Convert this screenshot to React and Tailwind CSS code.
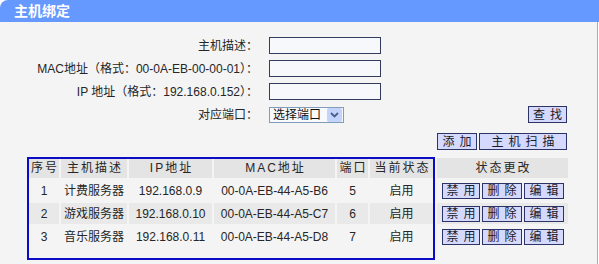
import React from "react";

function Btn({ chars, w, h = "h-[17px]" }) {
  return (
    <div
      className={`${w} ${h} flex items-center justify-center gap-[5px] border border-[#2c3466] bg-[#d5d9fd] text-[12px] leading-none text-[#1a1a2a]`}
    >
      {chars.map((c, i) => (
        <span key={i}>{c}</span>
      ))}
    </div>
  );
}

function Field({ label }) {
  return (
    <div className="flex h-[17px] items-center">
      <div className="w-[258px] text-right leading-none whitespace-nowrap">{label}</div>
      <div className="ml-[11px] h-[17px] w-[112px] border border-[#343c5e] bg-[#f6f8fc]" />
    </div>
  );
}

const rows = [
  ["1", "计费服务器", "192.168.0.9", "00-0A-EB-44-A5-B6", "5", "启用"],
  ["2", "游戏服务器", "192.168.0.10", "00-0A-EB-44-A5-C7", "6", "启用"],
  ["3", "音乐服务器", "192.168.0.11", "00-0A-EB-44-A5-D8", "7", "启用"],
];

const heads = ["序号", "主机描述", "IP地址", "MAC地址", "端口", "当前状态"];

export default function App() {
  return (
    <div className="h-[264px] w-[599px] overflow-hidden bg-white font-['Liberation_Sans','Noto_Sans_CJK_SC',sans-serif] text-[12px] text-[#262626]">
      <div className="flex h-[22px] items-center rounded-tl-[8px] bg-[#6699ff] pl-[14px] text-[14px] font-bold leading-none text-white">
        主机绑定
      </div>
      <div className="relative h-[242px] w-[598px] border-r border-[#e6a04a] bg-[#f4f4f4]">
        <div className="flex flex-col gap-[6px] pt-[15px]">
          <Field label="主机描述：" />
          <Field label="MAC地址（格式：00-0A-EB-00-00-01）：" />
          <Field label="IP 地址（格式：192.168.0.152）：" />
          <div className="flex h-[17px] items-center pr-[30px]">
            <div className="w-[258px] text-right leading-none">对应端口：</div>
            <div className="ml-[11px] flex h-[16px] w-[75px] items-center border border-[#7f9db9] bg-[#f8f9fc] pl-[3px]">
              <span className="flex-1 leading-none text-[#111]">选择端口</span>
              <div className="mr-[1px] flex h-[14px] w-[15px] items-center justify-center rounded-[2px] bg-[#c3d3fb]">
                <svg width="9" height="6" viewBox="0 0 9 6">
                  <path d="M1 1 L4.5 4.5 L8 1" fill="none" stroke="#4a5e90" strokeWidth="1.8" />
                </svg>
              </div>
            </div>
            <div className="ml-auto">
              <Btn chars={["查", "找"]} w="w-[39px]" />
            </div>
          </div>
          <div className="mt-[4px] flex justify-end gap-[2px] pr-[30px]">
            <Btn chars={["添", "加"]} w="w-[40px]" />
            <Btn chars={["主", "机", "扫", "描"]} w="w-[88px]" />
          </div>
        </div>

        <div className="mt-[8px] pl-[29px]">
          <div className="grid grid-cols-[30px_66px_83px_121px_31px_63px_133px] gap-x-[2px] gap-y-[2px]">
            {heads.map((h) => (
              <div
                key={h}
                className="flex h-[20px] items-center justify-center bg-[#e4e4e4] pl-[2px] leading-none tracking-[2px] whitespace-nowrap text-[#262626]"
              >
                {h}
              </div>
            ))}
            <div className="ml-[2px] flex h-[20px] items-center justify-center bg-[#e4e4e4] pl-[2px] leading-none tracking-[2px]">
              状态更改
            </div>
            {rows.map((r, ri) => {
              const bg = ri === 1 ? "bg-[#e9e9e9]" : "";
              return (
                <React.Fragment key={ri}>
                  {r.map((c, ci) => (
                    <div
                      key={ci}
                      className={`flex h-[21px] items-center justify-center leading-none whitespace-nowrap ${bg}`}
                    >
                      {c}
                    </div>
                  ))}
                  <div className={`ml-[2px] flex h-[21px] items-center gap-[2px] pl-[5px] ${bg}`}>
                    <Btn chars={["禁", "用"]} w="w-[38px]" h="h-[16px]" />
                    <Btn chars={["删", "除"]} w="w-[40px]" h="h-[16px]" />
                    <Btn chars={["编", "辑"]} w="w-[40px]" h="h-[16px]" />
                  </div>
                </React.Fragment>
              );
            })}
          </div>
        </div>

        <div className="pointer-events-none absolute left-[27px] top-[135px] h-[103px] w-[408px] border-2 border-[#0c0cc6]" />
      </div>
    </div>
  );
}
